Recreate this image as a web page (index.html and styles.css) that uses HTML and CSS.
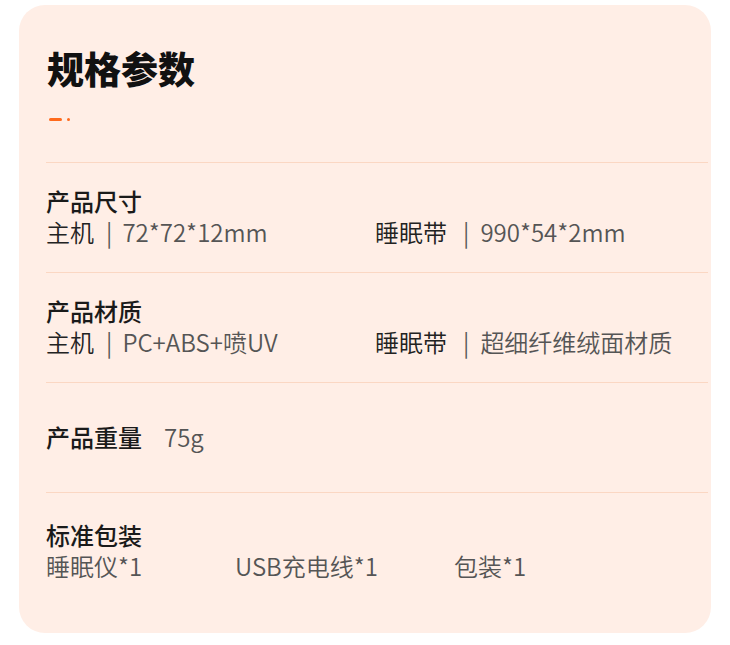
FILE: index.html
```html
<!DOCTYPE html>
<html lang="zh-CN">
<head>
    <meta charset="UTF-8">
    <title>规格参数</title>
    <link rel="stylesheet" href="styles.css">
</head>
<body>

    <div class="card">
        <h1 class="title">规格参数</h1>
        <div class="accent"><span class="dash"></span><span class="dot"></span></div>

        <div class="spec_list">
            <div class="spec_row">
                <div class="label">产品尺寸</div>
                <div class="pair">
                    <div class="value"><span class="name">主机</span><span class="sep">|</span>72*72*12mm</div>
                    <div class="value"><span class="name">睡眠带</span><span class="sep wide">|</span>990*54*2mm</div>
                </div>
            </div>
            <div class="spec_row">
                <div class="label">产品材质</div>
                <div class="pair">
                    <div class="value"><span class="name">主机</span><span class="sep">|</span>PC+ABS+喷UV</div>
                    <div class="value"><span class="name">睡眠带</span><span class="sep wide">|</span>超细纤维绒面材质</div>
                </div>
            </div>
            <div class="spec_row inline">
                <div class="label">产品重量</div>
                <div class="value weight">75g</div>
            </div>
            <div class="spec_row last">
                <div class="label">标准包装</div>
                <div class="package">
                    <div class="value">睡眠仪*1</div>
                    <div class="value">USB充电线*1</div>
                    <div class="value">包装*1</div>
                </div>
            </div>
        </div>
    </div>

</body>
</html>
```

FILE: styles.css
```css
body {
    margin: 0;
    background: #fff;
    font-family: "Noto Sans CJK SC", "Noto Sans", sans-serif;
}
.card {
    margin: 5px 19px 0;
    height: 628px;
    box-sizing: border-box;
    padding: 39px 3px 0 27px;
    background: #ffeee6;
    border-radius: 26px;
}
.title {
    margin: 0 0 0 1px;
    font-size: 37px;
    line-height: 48px;
    font-weight: 900;
    color: #111;
}
.accent {
    display: flex;
    align-items: center;
    gap: 5px;
    margin: 26px 0 0 3px;
    height: 3px;
}
.dash {
    width: 13px;
    height: 3px;
    border-radius: 2px;
    background: #ff6a1c;
}
.dot {
    width: 3px;
    height: 3px;
    border-radius: 50%;
    background: #ff6a1c;
}
.spec_list {
    margin-top: 41px;
}
.spec_row {
    height: 110px;
    box-sizing: border-box;
    padding-bottom: 3px;
    border-top: 1px solid #fbd7c3;
    display: flex;
    flex-direction: column;
    justify-content: center;
    font-size: 24px;
    line-height: 31px;
}
.spec_row.inline {
    flex-direction: row;
    align-items: center;
    justify-content: flex-start;
}
.spec_row.last {
    height: 118px;
}
.label {
    color: #1a1a1a;
    font-weight: 500;
}
.value {
    color: #555;
    font-weight: 350;
    white-space: nowrap;
}
.value .name {
    color: #222;
}
.pair {
    display: grid;
    grid-template-columns: 329px 1fr;
}
.sep {
    margin: 0 10px 0 12px;
    color: #555;
}
.sep.wide {
    margin: 0 11px 0 16px;
}
.weight {
    margin-left: 22px;
}
.package {
    display: grid;
    grid-template-columns: 189px 219px 1fr;
}
```
